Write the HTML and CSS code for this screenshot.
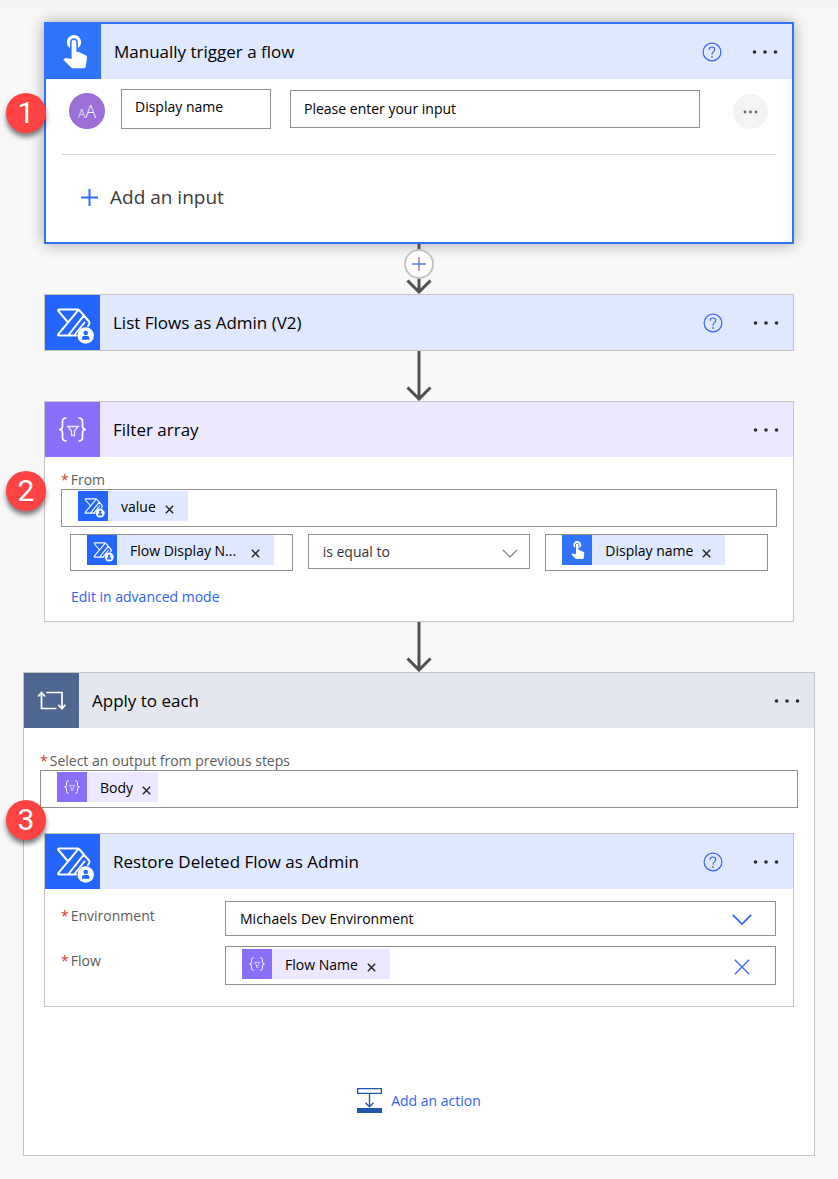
FILE: index.html
```html
<!DOCTYPE html>
<html lang="en">
<head>
<meta charset="utf-8">
<title>Flow designer</title>
<meta name="viewport" content="width=device-width, initial-scale=1">
<link rel="stylesheet" href="styles.css">
</head>
<body>
<svg class="defs" aria-hidden="true">
  <symbol id="touch" viewBox="0 0 55 55">
    <path transform="translate(9.8 6.3) scale(1.58)" fill="#fff" d="M9 11.24V7.5C9 6.12 10.12 5 11.5 5S14 6.12 14 7.5v3.74c1.21-.81 2-2.18 2-3.74C16 5.01 13.99 3 11.5 3S7 5.01 7 7.5c0 1.56.79 2.93 2 3.74zm9.84 4.63l-4.54-2.26c-.17-.07-.35-.11-.54-.11H13v-6c0-.83-.67-1.5-1.5-1.5S10 6.67 10 7.5v10.74l-3.43-.72c-.08-.01-.15-.03-.24-.03-.31 0-.59.13-.79.33l-.79.8 4.94 4.94c.27.27.65.44 1.06.44h6.79c.75 0 1.33-.55 1.44-1.28l.75-5.27c.01-.07.02-.14.02-.2 0-.62-.38-1.16-.91-1.38z"/>
  </symbol>
  <symbol id="admin" viewBox="0 0 55 55">
    <g fill="none" stroke="#fff" stroke-width="2" stroke-linejoin="round" stroke-linecap="round">
      <path d="M31 40.5H14.2Q12.4 40.4 13.5 38.8L33.5 14.8M22.7 27L13.4 16Q12.600 14.600 14.200 14.500H32.500Q33.700 14.600 34.500 15.500L44 26.500Q45.200 28 44 29.500L43 31M39 20.300L23.500 40M29.500 40L39.500 27.500"/>
    </g>
    <circle cx="40.700" cy="40.500" r="8.300" fill="#fff"/>
    <circle cx="40.700" cy="38" r="2.300" fill="#2266ff"/>
    <path d="M37 44.800V43Q37 41 39 41H42.400Q44.400 41 44.400 43V44.800Z" fill="#2266ff"/>
  </symbol>
  <symbol id="filter" viewBox="0 0 55 55">
    <g fill="none" stroke="#fff" stroke-width="1.700">
      <path d="M21.500 16Q17.500 16 17.500 19.500V24Q17.500 27.500 14 27.500Q17.500 27.500 17.500 31V35.500Q17.500 39 21.500 39M33.500 16Q37.500 16 37.500 19.500V24Q37.500 27.500 41 27.500Q37.500 27.500 37.500 31V35.500Q37.500 39 33.500 39"/>
      <path stroke-width="1.300" opacity=".85" d="M22.800 24.500H33.200L29.500 29V33.500H26.500V29Z"/>
    </g>
  </symbol>
  <symbol id="loop" viewBox="0 0 55 55">
    <path fill="none" stroke="#fff" stroke-width="1.700" d="M17.500 20V35.500H32.500M22.300 19.500H38V35M14 23.500L17.500 19.500L21 23.500M34.300 31.800L38 35.800L41.300 31.800"/>
  </symbol>
  <symbol id="help" viewBox="0 0 20 20">
    <circle cx="10" cy="10" r="8.900" fill="none" stroke="#3f62f5" stroke-width="1.200"/>
    <path fill="none" stroke="#3f62f5" stroke-width="1.200" d="M7.200 7.800Q7.200 5 10 5Q12.700 5 12.700 7.500Q12.700 8.800 11.300 9.900Q10 11 10 12.700"/>
    <circle cx="10" cy="14.900" r=".9" fill="#3f62f5"/>
  </symbol>
  <symbol id="dots" viewBox="0 0 26 6">
    <g fill="#2b2b2b"><circle cx="2.500" cy="3" r="1.800"/><circle cx="13" cy="3" r="1.800"/><circle cx="23.500" cy="3" r="1.800"/></g>
  </symbol>
  <symbol id="cross" viewBox="0 0 9 9">
    <path fill="none" stroke="#222" stroke-width="1.400" d="M.8.8L8.200 8.200M8.200.8L.8 8.200"/>
  </symbol>
  <symbol id="arrow" viewBox="0 0 26 50">
    <path fill="none" stroke="#505050" stroke-width="3" d="M13 0V48M1.500 36.500L13 48L24.500 36.500"/>
  </symbol>
</svg>

<main class="designer">
  <section class="card card-selected">
    <span class="step step-first">1</span>
    <header class="head head-blue">
      <span class="tile tile-touch"><svg class="tile-icon"><use href="#touch"/></svg></span>
      <h2 class="title">Manually trigger a flow</h2>
      <button class="icon-btn" aria-label="Help"><svg class="help"><use href="#help"/></svg></button>
      <button class="icon-btn" aria-label="More"><svg class="dots"><use href="#dots"/></svg></button>
    </header>
    <div class="trigger">
      <div class="input-row">
        <span class="kind"><span class="kind-small">A</span>A</span>
        <input class="field name-field" type="text" value="Display name" aria-label="Input name">
        <input class="field prompt-field" type="text" value="Please enter your input" aria-label="Input prompt">
        <button class="round-btn" aria-label="Input options"><svg class="mini-dots" viewBox="0 0 15 4"><g fill="#666"><circle cx="2" cy="2" r="1.400"/><circle cx="7.500" cy="2" r="1.400"/><circle cx="13" cy="2" r="1.400"/></g></svg></button>
      </div>
      <button class="add-input"><svg class="plus" viewBox="0 0 17 17"><path stroke="#2f6bff" stroke-width="2" d="M8.500 0V17M0 8.500H17"/></svg>Add an input</button>
    </div>
  </section>

  <div class="link">
    <svg class="arrow"><use href="#arrow"/></svg>
    <button class="insert" aria-label="Insert a step"><svg class="insert-plus" viewBox="0 0 14 14"><path stroke="#a779c9" stroke-width="1.500" d="M7 0V14"/><path stroke="#2f6fd8" stroke-width="1.300" d="M0 7H14"/></svg></button>
  </div>

  <section class="card">
    <header class="head head-blue">
      <span class="tile tile-admin"><svg class="tile-icon"><use href="#admin"/></svg></span>
      <h2 class="title">List Flows as Admin (V2)</h2>
      <button class="icon-btn" aria-label="Help"><svg class="help"><use href="#help"/></svg></button>
      <button class="icon-btn" aria-label="More"><svg class="dots"><use href="#dots"/></svg></button>
    </header>
  </section>

  <div class="link"><svg class="arrow"><use href="#arrow"/></svg></div>

  <section class="card">
    <span class="step step-filter">2</span>
    <header class="head head-violet">
      <span class="tile tile-filter"><svg class="tile-icon"><use href="#filter"/></svg></span>
      <h2 class="title">Filter array</h2>
      <button class="icon-btn" aria-label="More"><svg class="dots"><use href="#dots"/></svg></button>
    </header>
    <div class="filter-body">
      <div class="label"><span class="req">*</span>From</div>
      <div class="field token-box">
        <span class="token token-blue"><span class="chip tile-admin"><svg class="chip-icon"><use href="#admin"/></svg></span><span class="token-text">value</span><button class="remove" aria-label="Remove value"><svg class="cross"><use href="#cross"/></svg></button></span>
      </div>
      <div class="condition">
        <div class="field token-box token-top">
          <span class="token token-blue"><span class="chip tile-admin"><svg class="chip-icon"><use href="#admin"/></svg></span><span class="token-text token-clipped">Flow Display N...</span><button class="remove" aria-label="Remove Flow Display Name"><svg class="cross"><use href="#cross"/></svg></button></span>
        </div>
        <div class="picker">
          <select class="field select select-op" aria-label="Operator"><option>is equal to</option></select>
          <svg class="chevron chevron-op" viewBox="0 0 16 9"><path fill="none" stroke="#777" stroke-width="1.100" d="M.8.8L8 8L15.200.8"/></svg>
        </div>
        <div class="field token-box token-top">
          <span class="token token-blue"><span class="chip tile-touch"><svg class="chip-icon"><use href="#touch"/></svg></span><span class="token-text">Display name</span><button class="remove" aria-label="Remove Display name"><svg class="cross"><use href="#cross"/></svg></button></span>
        </div>
      </div>
      <a class="advanced" href="#">Edit in advanced mode</a>
    </div>
  </section>

  <div class="link"><svg class="arrow"><use href="#arrow"/></svg></div>

  <section class="card card-wide">
    <span class="step step-loop">3</span>
    <header class="head head-slate">
      <span class="tile tile-loop"><svg class="tile-icon"><use href="#loop"/></svg></span>
      <h2 class="title">Apply to each</h2>
      <button class="icon-btn" aria-label="More"><svg class="dots"><use href="#dots"/></svg></button>
    </header>
    <div class="loop-body">
      <div class="label"><span class="req">*</span>Select an output from previous steps</div>
      <div class="field token-box">
        <span class="token token-violet token-tight"><span class="chip tile-filter"><svg class="chip-icon"><use href="#filter"/></svg></span><span class="token-text">Body</span><button class="remove" aria-label="Remove Body"><svg class="cross"><use href="#cross"/></svg></button></span>
      </div>
      <section class="card card-nested">
        <header class="head head-blue">
          <span class="tile tile-admin"><svg class="tile-icon"><use href="#admin"/></svg></span>
          <h2 class="title">Restore Deleted Flow as Admin</h2>
          <button class="icon-btn" aria-label="Help"><svg class="help"><use href="#help"/></svg></button>
          <button class="icon-btn" aria-label="More"><svg class="dots"><use href="#dots"/></svg></button>
        </header>
        <div class="params">
          <label class="label param-label" for="environment"><span class="req">*</span>Environment</label>
          <div class="picker">
            <select class="field select select-env" id="environment"><option>Michaels Dev Environment</option></select>
            <svg class="chevron chevron-env" viewBox="0 0 20 11"><path fill="none" stroke="#2f62f5" stroke-width="1.700" d="M.8.8L10 10L19.200.8"/></svg>
          </div>
          <div class="label param-label"><span class="req">*</span>Flow</div>
          <div class="field token-box flow-box">
            <span class="token token-violet"><span class="chip tile-filter"><svg class="chip-icon"><use href="#filter"/></svg></span><span class="token-text">Flow Name</span><button class="remove" aria-label="Remove Flow Name"><svg class="cross"><use href="#cross"/></svg></button></span>
            <button class="clear" aria-label="Clear flow"><svg class="clear-icon" viewBox="0 0 16 16"><path stroke="#3f62f5" stroke-width="1.300" d="M.8.8L15.200 15.200M15.200.8L.8 15.200"/></svg></button>
          </div>
        </div>
      </section>
      <button class="add-action"><svg class="action-icon" viewBox="0 0 25 25"><path fill="none" stroke="#2057ae" stroke-width="1.300" d="M.6.600H24.400V5.400H.6ZM12.500 6V18.500M8.500 14.800L12.500 18.800L16.500 14.800"/><path fill="#2057ae" d="M0 20H25V25H0Z"/></svg>Add an action</button>
    </div>
  </section>
</main>
</body>
</html>
```
FILE: styles.css
```css
* { box-sizing: border-box; }
body {
  margin: 0;
  border-top: 8px solid #f3f3f3;
  background: #f8f8f8;
  color: #000;
  font-family: "Open Sans", "Noto Sans", sans-serif;
  font-size: 14px;
}
button, input, select { font: inherit; color: inherit; }
button { padding: 0; border: 0; background: none; cursor: pointer; }
svg { display: block; flex: none; }
.defs { position: absolute; width: 0; height: 0; }
.designer { padding: 14px 23px 23px; }

.card {
  position: relative;
  margin: 0 21px;
  border: 1px solid #c4c4c4;
  background: #fff;
}
.card-selected {
  border: 2px solid #2f74f7;
  box-shadow: 0 0 14px rgba(0, 0, 0, .35);
}
.card-wide { margin: 0; }
.card-nested { margin: 25px 4px 0; }

.head { display: flex; align-items: center; height: 55px; padding-right: 14px; }
.head-blue { background: #dfe8ff; }
.head-violet { background: #ede8ff; }
.head-slate { background: #e4e7ef; }
.tile { width: 55px; height: 55px; }
.tile-icon { width: 55px; height: 55px; }
.tile-touch { background: #2f74fa; }
.tile-admin { background: #2266ff; }
.tile-filter { background: #8b6ffa; }
.tile-loop { background: #4f6790; }
.title { flex: 1; margin: 0 0 0 13px; font-size: 17px; font-weight: 400; line-height: 24px; }
.icon-btn + .icon-btn { margin-left: 30px; }
.help { width: 20px; height: 20px; }
.dots { width: 26px; height: 6px; }

.step {
  position: absolute;
  z-index: 2;
  display: grid;
  place-items: center;
  width: 40px;
  height: 40px;
  border-radius: 50%;
  background: #ff4343;
  box-shadow: 0 4px 5px rgba(0, 0, 0, .5);
  color: #fff;
  font-family: Roboto, "Liberation Sans", sans-serif;
  font-size: 30px;
  line-height: 40px;
}
.step-first { top: 69px; left: -40px; }
.step-filter { top: 69px; left: -39px; }
.step-loop { top: 127px; left: -18px; }

.field {
  min-width: 0;
  margin: 0;
  border: 1px solid #919191;
  border-radius: 0;
  background: #fff;
}
.trigger { padding: 10px 16px 0; }
.input-row {
  display: flex;
  align-items: center;
  padding: 0 8px 25px 7px;
  border-bottom: 1px solid #d6d6d6;
}
.kind {
  display: flex;
  align-items: baseline;
  align-self: flex-end;
  justify-content: center;
  width: 36px;
  height: 36px;
  margin-right: 16px;
  border-radius: 50%;
  background: #9b6fd6;
  color: #fff;
  font-size: 18px;
  font-weight: 300;
  line-height: 36px;
}
.kind-small { font-size: 12px; }
.name-field { width: 150px; height: 40px; margin-right: 19px; padding: 0 13px 5px; }
.prompt-field { flex: 1; height: 38px; padding: 0 13px 2px; }
.round-btn {
  display: grid;
  place-items: center;
  align-self: flex-end;
  width: 35px;
  height: 35px;
  margin-left: 33px;
  border-radius: 50%;
  background: #f4f4f4;
}
.mini-dots { width: 15px; height: 4px; }
.add-input {
  display: flex;
  align-items: center;
  gap: 12px;
  height: 40px;
  margin: 22px 19px 25px;
  color: #3b3b3b;
  font-size: 19px;
}
.plus { width: 17px; height: 17px; }

.link { position: relative; display: flex; justify-content: center; height: 50px; }
.arrow { width: 26px; height: 50px; }
.insert {
  position: absolute;
  top: 5px;
  left: calc(50% - 15px);
  display: grid;
  place-items: center;
  width: 30px;
  height: 30px;
  border: 2px solid #c4c4c4;
  border-radius: 50%;
  background: #fff;
}
.insert-plus { width: 14px; height: 14px; }

.label { color: #5c5c5c; line-height: 18px; }
.req { margin-right: 2px; color: #d83b2b; }
.filter-body { padding: 14px 16px 13px; }
.token-box { height: 38px; padding: 1px 16px; }
.token-top { height: 37px; padding-top: 0; }
.token { display: inline-flex; align-items: center; height: 30px; padding-right: 14px; vertical-align: top; }
.token-tight { padding-right: 7px; }
.token-blue { background: #dfe8ff; }
.token-violet { background: #ede8ff; }
.chip, .chip-icon { width: 30px; height: 30px; }
.token-text { margin: 0 9px 0 13px; white-space: nowrap; }
.token-clipped { margin-right: 15px; }
.remove { padding-top: 6px; }
.cross { width: 9px; height: 9px; }
.condition {
  display: grid;
  grid-template-columns: repeat(3, minmax(0, 1fr));
  gap: 15px;
  align-items: start;
  margin: 7px 9px 15px;
}
.picker { position: relative; }
.select { display: block; width: 100%; height: 35px; padding: 0 40px 0 14px; appearance: none; }
.select-op { color: #333; }
.chevron { position: absolute; top: 50%; pointer-events: none; }
.chevron-op { right: 12px; width: 16px; height: 9px; margin-top: -3px; }
.chevron-env { right: 24px; width: 20px; height: 11px; margin-top: -5px; }
.advanced {
  display: block;
  width: fit-content;
  margin-left: 10px;
  color: #2f62f5;
  line-height: 22px;
  text-decoration: none;
}

.loop-body { padding: 24px 16px 42px; }
.params {
  display: grid;
  grid-template-columns: 164px minmax(0, 1fr);
  row-gap: 10px;
  padding: 12px 17px 21px 16px;
}
.param-label { padding-top: 6px; }
.flow-box { display: flex; align-items: flex-start; justify-content: space-between; height: 39px; padding: 2px 25px 0 16px; }
.clear { padding-top: 10px; }
.clear-icon { width: 16px; height: 16px; }
.add-action {
  display: flex;
  align-items: center;
  gap: 9px;
  height: 26px;
  margin: 80px auto 0;
  color: #2f62f5;
}
.action-icon { width: 25px; height: 25px; }
```
